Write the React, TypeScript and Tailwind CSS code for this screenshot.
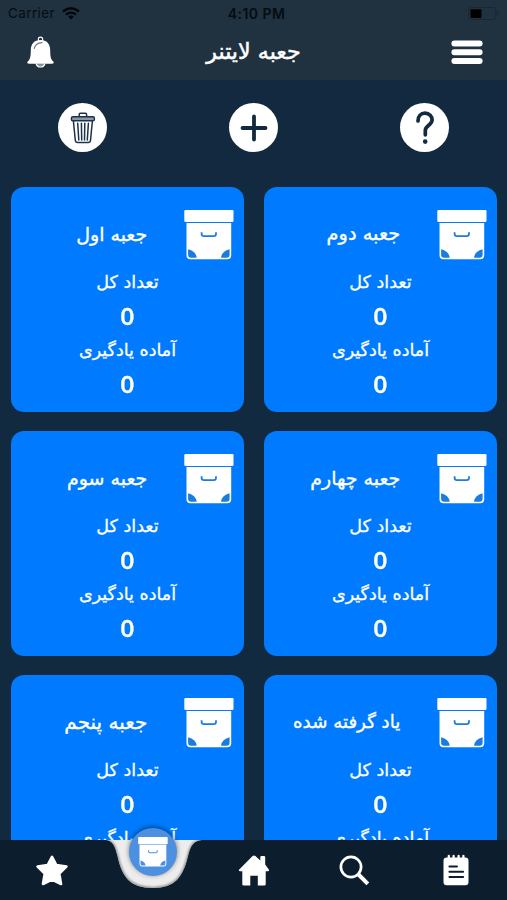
import React from "react";

const boxes: [string, string][] = [
  ["جعبه اول", "text-[19px]"],
  ["جعبه دوم", "text-[19.4px]"],
  ["جعبه سوم", "text-[19px]"],
  ["جعبه چهارم", "text-[19px]"],
  ["جعبه پنجم", "text-[20px]"],
  ["یاد گرفته شده", "text-[18.2px]"],
];

function BoxIcon({ className, ink }: { className: string; ink: string }) {
  return (
    <svg viewBox="0 0 50 50" className={className} aria-hidden="true">
      <rect x="0.3" y="0.1" width="49.2" height="11.8" rx="1.2" fill="#fff" />
      <path d="M2.5 13H47.2V45.2Q47.2 49.2 43.3 49.2H6.4Q2.5 49.2 2.5 45.2Z" fill="#fff" />
      <path d="M17.6 22.2V23.8Q17.6 26.2 20 26.2H29.6Q32 26.2 32 23.8V22.2" fill="none" stroke={ink} strokeWidth="1.8" />
      <path d="M4.1 39.2Q11.7 40.8 12.7 47.7H7.2Q4.1 47.7 4.1 44.8ZM45.6 39.2Q38 40.8 37 47.7H42.5Q45.6 47.7 45.6 44.8Z" fill={ink} />
    </svg>
  );
}

function Stat({ label }: { label: string }) {
  return (
    <>
      <p dir="rtl" className="h-[30px] whitespace-nowrap text-[17.5px] leading-[30px] [-webkit-text-stroke:0.3px_white]">
        {label}
      </p>
      <p className="h-[38px] scale-x-110 font-['Open_Sans',sans-serif] text-[22.5px] leading-[40px] font-semibold [-webkit-text-stroke:0.3px_white]">
        0
      </p>
    </>
  );
}

function Card({ title, size }: { title: string; size: string }) {
  return (
    <article className="flex h-[225px] flex-col rounded-[13px] bg-[#007bff] pt-[23px] text-white">
      <div className="flex h-[50px] items-center justify-end pr-[10px]">
        <h2
          dir="rtl"
          className={`mr-[37px] flex h-[32px] items-start whitespace-nowrap leading-[30px] [-webkit-text-stroke:0.35px_white] ${size}`}
        >
          {title}
        </h2>
        <BoxIcon className="h-[50px] w-[50px] shrink-0" ink="#1c7be0" />
      </div>
      <div className="flex flex-col items-center pt-[7px]">
        <Stat label="تعداد کل" />
        <Stat label="آماده یادگیری" />
      </div>
    </article>
  );
}

function Header() {
  return (
    <header className="h-20 shrink-0 bg-[#20313f]">
      <div className="grid h-[27px] grid-cols-3 items-center pr-[7px] pl-[8px] font-['Inter',sans-serif] text-[13.4px] text-[#050c12]">
        <div className="flex items-center gap-[7px]">
          <span className="tracking-[0.45px]">Carrier</span>
          <svg viewBox="0 0 18 13" className="h-[13px] w-[18px]" aria-hidden="true">
            <g fill="none" stroke="#020609" strokeWidth="2.3">
              <path d="M1 4.5Q9-2 17 4.5" />
              <path d="M4 7.7Q9 3.6 14 7.7" />
            </g>
            <path d="M6.2 9.5Q9 7.5 11.8 9.5L9 12.5Z" fill="#020609" />
          </svg>
        </div>
        <span className="pl-[5px] text-center text-[14px] font-semibold whitespace-nowrap tracking-[0.45px]">4:10 PM</span>
        <svg viewBox="0 0 34 15" className="h-[15px] w-[34px] justify-self-end" aria-hidden="true">
          <rect x="2.5" y="1.5" width="27.5" height="12" rx="3" fill="none" stroke="#172734" />
          <rect x="4.5" y="3.3" width="11" height="8.7" rx="1" fill="#000" />
          <path d="M31.5 5Q34 7.5 31.5 10Z" fill="#172734" />
        </svg>
      </div>
      <div className="flex h-[50px] items-center justify-between pr-[24px] pl-[27px]">
        <svg viewBox="0 0 27 32" className="h-8 w-[27px]" aria-hidden="true">
          <circle cx="13.5" cy="3.3" r="2.2" fill="none" stroke="#fff" strokeWidth="1.1" />
          <path d="M9 27.5Q10 31 13.5 31T18 27.5" fill="#8492a0" stroke="#fff" strokeWidth="1.1" />
          <path d="M13.5 4C7 4 3.9 8 3.8 14C3.7 21 3.2 23.5.3 26Q-.2 27.7 1.8 27.7H25.2Q27.2 27.7 26.7 26C23.8 23.5 23.3 21 23.2 14C23.1 8 20 4 13.5 4Z" fill="#fff" />
          <path d="M7.3 12.5Q8.5 6.8 15 6.6" fill="none" stroke="#6e7c88" strokeWidth="1.2" strokeLinecap="round" />
        </svg>
        <h1 dir="rtl" className="mr-[-2px] flex w-[95px] justify-center text-[22.2px] whitespace-nowrap [-webkit-text-stroke:0.5px_white]">جعبه لایتنر</h1>
        <svg viewBox="0 0 32 25" className="h-[25px] w-8" aria-hidden="true">
          <path d="M3.4 3.6H28.6M3.4 12.3H28.6M3.4 21H28.6" stroke="#fff" strokeWidth="6" strokeLinecap="round" />
        </svg>
      </div>
    </header>
  );
}

function Actions() {
  const circle = "flex size-[49px] items-center justify-center rounded-full bg-white";
  return (
    <div className="flex h-[106px] shrink-0 items-start justify-between px-[58px] pt-[23.4px]">
      <button className={circle} aria-label="حذف">
        <svg viewBox="0 0 26 32" className="h-8 w-[26px]" fill="none" stroke="#1c3248" strokeWidth="1.5" strokeLinejoin="round" strokeLinecap="round">
          <path d="M9.2 4.5V2.6Q9.2 1.3 10.5 1.3H15.3Q16.6 1.3 16.6 2.6V4.5" />
          <rect x="1.4" y="4.8" width="23" height="4" rx="1.6" fill="#8b99a6" />
          <path d="M3.4 9L5.3 28.3Q5.5 30.5 7.7 30.5H18.1Q20.3 30.5 20.5 28.3L22.4 9M7.7 11.2L8.8 28M11.4 11.2L11.7 28M14.8 11.2L14.5 28M18.4 11.2L17.3 28" />
        </svg>
      </button>
      <button className={circle} aria-label="افزودن">
        <svg viewBox="0 0 28 28" className="size-7" stroke="#12293f" strokeWidth="3.8" strokeLinecap="round">
          <path d="M14 2.5V25.5M2.5 14H25.5" />
        </svg>
      </button>
      <button className={circle} aria-label="راهنما">
        <svg viewBox="0 0 20 36" className="h-9 w-5" fill="none" stroke="#12293f" strokeWidth="3.7" strokeLinecap="round">
          <path d="M3 11C3 6 6 3.2 10 3.2C14.4 3.2 17.1 6.5 17.1 10C17.1 15 10.3 15.5 10.3 20.5V24.8" />
          <circle cx="10.2" cy="31.6" r="2.3" fill="#12293f" stroke="none" />
        </svg>
      </button>
    </div>
  );
}

function TabBar() {
  return (
    <nav className="relative flex h-[60px] shrink-0 items-center bg-[#0c1e2d]">
      <div className="flex w-[103px] justify-center">
        <svg viewBox="0 0 32 31" className="h-[31px] w-8" fill="#fff" stroke="#fff" strokeWidth="2.6" strokeLinejoin="round">
          <path d="M16 1.8L20.3 10.1L30.4 11.6L23.3 18.6L25 29L16 24.6L7 29L8.7 18.6L1.6 11.6L11.7 10.1Z" />
        </svg>
      </div>
      <div className="w-[100px]" />
      <div className="flex w-[102px] justify-center">
        <svg viewBox="0 0 32 31" className="h-[31px] w-8" fill="#fff">
          <path d="M14.6 1.1Q16 .1 17.4 1.1L22.3 5.4V2.2Q22.3 1 23.5 1H26Q27.2 1 27.2 2.2V9.6L31 14.7Q31.5 16.2 29.8 16.3H27.7V29.2Q27.7 30.5 26.4 30.5H19.8V20.7H12.3V30.5H5.6Q4.3 30.5 4.3 29.2V16.3H2.2Q.5 16.2 1 14.7Z" />
        </svg>
      </div>
      <div className="flex w-[99px] justify-center">
        <svg viewBox="0 0 31 31" className="size-[31px]" fill="none" stroke="#fff" strokeLinecap="round">
          <circle cx="12" cy="12" r="10.1" strokeWidth="2.7" />
          <path d="M19.5 19.5L28.8 28.8" strokeWidth="4" strokeLinecap="butt" />
        </svg>
      </div>
      <div className="flex w-[103px] justify-center">
        <svg viewBox="0 0 26 32" className="h-8 w-[26px]" fill="#fff">
          <rect x="0.5" y="3.6" width="25" height="27.7" rx="3.2" />
          <path d="M5.8 6V2M10.6 6V2M15.6 6V2M20.4 6V2" stroke="#fff" strokeWidth="2.3" strokeLinecap="round" />
          <path d="M6.4 12.5H14M6.4 17.8H20.2M6.4 23H20.2" stroke="#0c1e2d" strokeWidth="1.9" strokeLinecap="round" />
        </svg>
      </div>
      <svg viewBox="0 0 110 76" className="absolute top-[-20px] left-[98px] h-[76px] w-[110px]" aria-hidden="true">
        <defs>
          <filter id="soft" x="-20%" y="-20%" width="140%" height="140%">
            <feGaussianBlur stdDeviation="1.1" />
          </filter>
          <clipPath id="notch">
            <path d="M8 20C15 21 17 26 19.5 36C24 57 32 68 55 68C77 68 85 57 90 36C92.5 26 95 21 104 20Z" />
          </clipPath>
        </defs>
        <path d="M8 20C15 21 17 26 19.5 36C24 57 32 68 55 68C77 68 85 57 90 36C92.5 26 95 21 104 20Z" fill="#ededed" />
        <g clipPath="url(#notch)">
          <path d="M8 20C15 21 17 26 19.5 36C24 57 32 68 55 68C77 68 85 57 90 36C92.5 26 95 21 104 20" fill="none" stroke="#8a8a8a" strokeWidth="2.2" filter="url(#soft)" />
        </g>
      </svg>
      <div className="absolute top-[-12px] left-[129px] flex size-[47.5px] items-center justify-center rounded-full bg-[#4c90df] shadow-[0_-1px_5px_rgba(0,0,0,0.5)]">
        <BoxIcon className="size-[30px]" ink="#4c90df" />
      </div>
    </nav>
  );
}

export default function App() {
  return (
    <main className="flex h-[900px] w-[507px] flex-col overflow-hidden bg-[#12293f] font-['DejaVu_Sans',sans-serif] text-white">
      <Header />
      <Actions />
      <section className="min-h-0 flex-1 overflow-hidden bg-[#112a40] pt-[0.5px] pr-[9.7px] pl-[10.7px]">
        <div className="grid grid-cols-2 gap-x-[19.4px] gap-y-[19.3px]">
          {boxes.map(([title, size]) => (
            <Card key={title} title={title} size={size} />
          ))}
        </div>
      </section>
      <TabBar />
    </main>
  );
}
